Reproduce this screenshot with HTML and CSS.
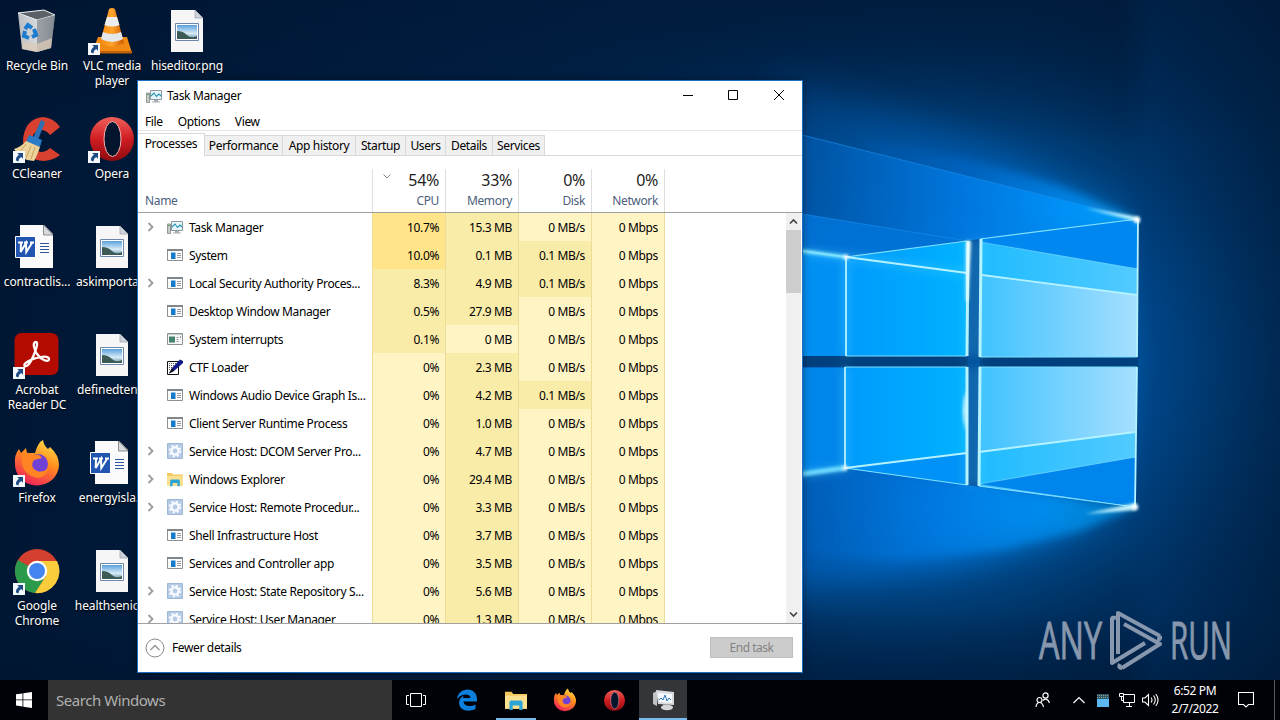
FILE: index.html
```
<!DOCTYPE html>
<html>
<head>
    <meta charset="utf-8"/>
    <title>Desktop</title>
    <link rel="stylesheet" href="styles.css">
</head>
<body>

<!-- Shared icons -->
<svg class="defs" width="0" height="0">
    <defs>
        <linearGradient id="redBall" x1="0" y1="0" x2="0" y2="1">
            <stop offset="0" stop-color="#f0605c"/><stop offset=".5" stop-color="#d01d22"/><stop offset="1" stop-color="#8c0a10"/>
        </linearGradient>
        <linearGradient id="fox" x1=".8" y1="0" x2=".3" y2="1">
            <stop offset="0" stop-color="#ffe14a"/><stop offset=".45" stop-color="#ff8a1e"/><stop offset="1" stop-color="#f0205c"/>
        </linearGradient>
        <linearGradient id="photo" x1="0" y1="0" x2="0" y2="1">
            <stop offset="0" stop-color="#5aa0dc"/><stop offset=".6" stop-color="#d9ecf5"/><stop offset="1" stop-color="#5f8fa8"/>
        </linearGradient>
        <linearGradient id="cone" x1="0" y1="0" x2="1" y2="0">
            <stop offset="0" stop-color="#f58a10"/><stop offset=".5" stop-color="#ffa42c"/><stop offset="1" stop-color="#cc5a00"/>
        </linearGradient>
        <linearGradient id="bin" x1="0" y1="0" x2="1" y2="0">
            <stop offset="0" stop-color="#b9bdc2"/><stop offset=".55" stop-color="#d9dbde"/><stop offset="1" stop-color="#7e848b"/>
        </linearGradient>
    </defs>

    <symbol id="shortcut" viewBox="0 0 12 12">
        <path d="M0 0h12v12H0z" fill="#f4f7fb"/>
        <path d="M4.200 2H10v5.800L8.200 6Q5.600 7.300 5.400 10.400L3 9.600Q2.600 6 6 3.800z" fill="#1e4b86"/>
    </symbol>
    <symbol id="recycle" viewBox="0 0 48 48">
        <path d="M5 6 31 3 42 8 38 41 24 45 9 42z" fill="url(#bin)"/>
        <path d="M5 6 31 3 42 8 24 13z" fill="#5c6167" stroke="#eceef0"/>
        <path d="M24 13 42 8 38 41 24 45z" fill="#868c93" opacity=".75"/>
        <path d="M9 34 24 37 39 31 38 41 24 45 9 42z" fill="#dccbb8" opacity=".75"/>
        <g fill="none" stroke="#1d7cd0" stroke-width="4">
            <path d="M12 22l3-4 4 3"/><path d="M21 22l2 6-4 2"/><path d="M16 31l-5-2 1-5"/>
        </g>
    </symbol>
    <symbol id="vlc" viewBox="0 0 48 48">
        <path d="M10 30h29l5 16H4z" fill="#f08a12"/>
        <path d="M4 44h40v2.500H4z" fill="#c35f05"/>
        <path d="M21 2q3-2 6 0l9 34q-12 7-24 0z" fill="url(#cone)"/>
        <path d="M19 10h10l2.500 8q-7.500 3-15 0z" fill="#eceef0"/>
        <path d="M15 25q9 4 18 0l2 7q-11 6-22 0z" fill="#e4e7ea"/>
    </symbol>
    <symbol id="picture" viewBox="0 0 48 48">
        <path d="M8 3h24l8 8v34H8z" fill="#f6f6f7"/>
        <path d="M32 3v8h8z" fill="#cfd3da" stroke="#9a9faa" stroke-width=".7"/>
        <path d="M12.500 16.500h23v17h-23z" fill="#fff" stroke="#6d87ad"/>
        <path d="M14 18h20v14H14z" fill="url(#photo)"/>
        <path d="M14 24q6 0 10 4t10 1v3H14z" fill="#3c5b57"/>
    </symbol>
    <symbol id="word" viewBox="0 0 48 48">
        <path d="M7 2h24l9 9v34H7z" fill="#fafafa"/>
        <path d="M30.500 2v10H40z" fill="#d8dade" stroke="#777" stroke-width=".8"/>
        <path d="M27 20.500h9M27 23.500h9M27 26.500h9M27 29.500h9" stroke="#2b579a"/>
        <path d="M2.500 13.500h20v21h-20z" fill="#2255b0" stroke="#fff"/>
        <path d="M5 19.500h5M11 19.500h4M17 19.500h4M8 20l-.3 9L13 20l.3 9L19 20" fill="none" stroke="#fff" stroke-width="2"/>
    </symbol>
    <symbol id="ccleaner" viewBox="0 0 48 48">
        <path d="M47 12 37 20q-4-5-9-5-9 1-9 12 0 9 9 10 5 0 9-4l10 7Q41 45 31 46 11 45 10 26 11 4 30 2q11 1 17 10z" fill="#d8402f"/>
        <path d="M28 5l4 2-7 18-5-2z" fill="#2d70b4"/>
        <path d="M16 20l13 5-2 7-14-5z" fill="#2a7cc8"/>
        <path d="M13 26l14 6q-3 9-6 14-13 0-20-12 7-2 12-8z" fill="#edd29a"/>
        <path d="M13 29l-6 8M18 31l-5 12M22 32l-4 12" stroke="#c7a263" fill="none"/>
    </symbol>
    <symbol id="opera" viewBox="0 0 48 48">
        <circle cx="24" cy="24" r="22" fill="url(#redBall)"/>
        <ellipse cx="24.500" cy="24" rx="8.500" ry="17.500" fill="#06152e" stroke="#f3b4b1"/>
    </symbol>
    <symbol id="acrobat" viewBox="0 0 48 48">
        <rect x="1.500" y="2" width="44" height="42" rx="7" fill="#b30b00"/>
        <path d="M23 11c-4 0-2 7 1 12 4 6 12 9 12 5 0-5-16-1-22 3-5 3-2 6 1 3 4-4 12-23 8-23z" fill="none" stroke="#fff" stroke-width="2.300"/>
    </symbol>
    <symbol id="firefox" viewBox="0 0 48 48">
        <path d="M2 25Q1 16 6 10l2 4 5-5 1 5 8 0Q25 3 30 1q1 6 5 9l2-2q9 8 9 18a22 21 0 0 1-44-1z" fill="url(#fox)"/>
        <circle cx="25" cy="25" r="10" fill="#7140d5"/>
        <path d="M9 15q7-3 12 1 5-2 8 3l-8 2q-5 7 3 11 7 2 12-4-1 9-11 11Q9 36 9 22z" fill="#ff8524"/>
    </symbol>
    <symbol id="chrome" viewBox="0 0 48 48">
        <circle cx="24" cy="24" r="22" fill="#d3402f"/>
        <path d="M24 24 5 13a22 22 0 0 0 17 33l11-17z" fill="#2b9a4b"/>
        <path d="M24 14h20a22 22 0 0 1-22 32l11-17z" fill="#fbcc3c"/>
        <circle cx="24" cy="24" r="10.200" fill="#fff"/>
        <circle cx="24" cy="24" r="8" fill="#4484ee"/>
    </symbol>
    <symbol id="taskmgr" viewBox="0 0 16 16">
        <path d="M.5 5h3v9.500h-3z" fill="#c9cdc9" stroke="#7d857f" stroke-width=".8"/>
        <path d="M1.200 6.500h1.600" stroke="#3f9b55"/>
        <path d="M4.500 2.500h11v9h-11z" fill="#e7f5fa" stroke="#8c979e"/>
        <path d="M5 8l3-3 2.500 3.500L13 6l2 2" fill="none" stroke="#2195b5" stroke-width="1.100"/>
        <path d="M8 12h4v1.500h2v1H6v-1h2z" fill="#a8afb4"/>
    </symbol>
    <symbol id="app" viewBox="0 0 16 16">
        <path d="M.5 2.500h15v11H.5z" fill="#fbfcfd" stroke="#8b9297"/>
        <path d="M0 2h16v2H0z" fill="#7f878c"/>
        <path d="M4 5.500h4.500v6.500H4z" fill="#1779ca"/>
        <path d="M10 6.500h4M10 8.500h4M10 10.500h4" stroke="#8a9197" stroke-width=".9"/>
    </symbol>
    <symbol id="interrupts" viewBox="0 0 16 16">
        <path d="M.5 2.500h15v11H.5z" fill="#f5f6f6" stroke="#8b9297"/>
        <path d="M1 3.500h14" stroke="#c5cacb"/>
        <path d="M2 5.500h6v6H2z" fill="#46806f"/>
        <path d="M9.500 6.500h2M9.500 8.500h2M9.500 10.500h2M13.500 5v2" stroke="#858c90" stroke-width=".9"/>
    </symbol>
    <symbol id="ctf" viewBox="0 0 16 16">
        <path d="M.5 2.500h11v13H.5z" fill="#fff" stroke="#111"/>
        <path d="M2 4.500h8M2 6.500h8M2 8.500h6M2 10.500h4" stroke="#555" stroke-dasharray="1 1"/>
        <path d="M2 14.500 5 9 13 .5l3 1.500v2L7 12z" fill="#111a88"/>
        <path d="M2 14.500 5 9l2 3z" fill="#111"/>
    </symbol>
    <symbol id="gear" viewBox="0 0 16 16">
        <path d="M.5.5h15v15H.5z" fill="#b5cae4" stroke="#9db7d8"/>
        <circle cx="8" cy="8" r="3.600" fill="none" stroke="#f7fafe" stroke-width="2.400"/>
        <circle cx="8" cy="8" r="5.400" fill="none" stroke="#f7fafe" stroke-width="2" stroke-dasharray="2.100 2.140"/>
    </symbol>
    <symbol id="folder" viewBox="0 0 20 18">
        <path d="M0 1.500h6l1.500 2H20V17H0z" fill="#f3c75c"/>
        <path d="M0 5h20v12H0z" fill="#fbe08f"/>
        <path d="M4 18v-7q0-1.500 1.500-1.500h9Q16 9.500 16 11v7h-3v-4H7v4z" fill="#2ba3d4"/>
    </symbol>
    <symbol id="chevron" viewBox="0 0 8 10">
        <path d="M1.500 1 5.500 5l-4 4" fill="none" stroke="#9c9c9c" stroke-width="1.800"/>
    </symbol>
</svg>

<div id="desktop">

    <svg class="wallpaper" width="1280" height="720" viewBox="0 0 1280 720">
        <defs>
            <radialGradient id="halo" gradientUnits="userSpaceOnUse" cx="0" cy="0" r="1" gradientTransform="translate(900 360) scale(500 370)">
                <stop offset="0" stop-color="#0070d4"/><stop offset=".4" stop-color="#0062bc"/>
                <stop offset=".66" stop-color="#004380" stop-opacity=".8"/><stop offset="1" stop-color="#002550" stop-opacity="0"/>
            </radialGradient>
            <linearGradient id="base" x1="0" y1="0" x2="1" y2="0">
                <stop offset="0" stop-color="#001734"/><stop offset=".5" stop-color="#00234a"/>
                <stop offset=".8" stop-color="#00254c"/><stop offset="1" stop-color="#001f42"/>
            </linearGradient>
            <linearGradient id="topShade" x1="0" y1="0" x2="0" y2="1">
                <stop offset="0" stop-color="#00122c" stop-opacity=".4"/><stop offset=".2" stop-color="#00122c" stop-opacity="0"/>
                <stop offset=".85" stop-color="#00122c" stop-opacity="0"/><stop offset="1" stop-color="#00122c" stop-opacity=".5"/>
            </linearGradient>
            <linearGradient id="rightShade" gradientUnits="userSpaceOnUse" x1="1120" y1="0" x2="1280" y2="0">
                <stop offset="0" stop-color="#00366e" stop-opacity="0"/><stop offset=".2" stop-color="#00366e" stop-opacity=".9"/><stop offset="1" stop-color="#002348"/>
            </linearGradient>
            <linearGradient id="beam" gradientUnits="userSpaceOnUse" x1="800" y1="0" x2="1140" y2="0">
                <stop offset="0" stop-color="#0054a4"/><stop offset=".45" stop-color="#0078e0"/><stop offset=".75" stop-color="#0090f8"/><stop offset="1" stop-color="#00a4ff"/>
            </linearGradient>
            <linearGradient id="spill" gradientUnits="userSpaceOnUse" x1="800" y1="0" x2="1140" y2="0">
                <stop offset="0" stop-color="#00488e"/><stop offset=".5" stop-color="#0066c4"/><stop offset=".8" stop-color="#0090f8"/><stop offset="1" stop-color="#18b4ff"/>
            </linearGradient>
            <linearGradient id="lowerSpill" gradientUnits="userSpaceOnUse" x1="800" y1="0" x2="1140" y2="0">
                <stop offset="0" stop-color="#005cb4"/><stop offset=".35" stop-color="#0078e0"/><stop offset=".75" stop-color="#0098fc"/><stop offset="1" stop-color="#00b0ff"/>
            </linearGradient>
            <linearGradient id="paneLeft" x1="0" y1="0" x2="1" y2="0">
                <stop offset="0" stop-color="#009afc"/><stop offset="1" stop-color="#00b2ff"/>
            </linearGradient>
            <linearGradient id="paneRight" x1="0" y1="0" x2="1" y2="0">
                <stop offset="0" stop-color="#3ec2ff"/><stop offset="1" stop-color="#a6dfff"/>
            </linearGradient>
            <filter id="soft" x="-30%" y="-50%" width="160%" height="200%"><feGaussianBlur stdDeviation="18"/></filter>
            <filter id="glow" x="-50%" y="-50%" width="200%" height="200%"><feGaussianBlur stdDeviation="5"/></filter>
            <filter id="spark" x="-50%" y="-100%" width="200%" height="300%"><feGaussianBlur stdDeviation="1.500"/></filter>
        </defs>
        <rect width="1280" height="720" fill="url(#base)"/>
        <rect width="1280" height="720" fill="url(#halo)"/>
        <rect x="1120" width="160" height="720" fill="url(#rightShade)" opacity=".5"/>
        <rect width="1280" height="720" fill="url(#topShade)"/>

        <!-- light spilling out of the panes -->
        <path d="M1120 222 1000 160 900 120 780 80V260H1000z" fill="url(#spill)" opacity=".55" filter="url(#soft)"/>
        <path d="M1138 219 1060 186 960 158 860 140 900 180 1060 225z" fill="url(#spill)" opacity=".7" filter="url(#glow)"/>
        <path d="M1100 508 1040 535 960 560 780 590V470H980z" fill="url(#lowerSpill)" opacity=".8" filter="url(#soft)"/>
        <path d="M1136 507 1080 531 1000 550 900 560 780 550V480L845 468 979 486z" fill="url(#lowerSpill)" opacity=".6" filter="url(#glow)"/>
        <path d="M802 135 1138 219 980 239 967 241 802 214z" fill="url(#beam)" opacity=".85"/>
        <path d="M802 214 967 241 846 257 802 251z" fill="#0076da" opacity=".85"/>
        <path d="M802 252 846 257V356H802z" fill="#0090f4"/>
        <path d="M802 368H845V468L802 474z" fill="#0086ea"/>
        <path d="M802 135 1138 219M802 214 967 241" stroke="#1d92f0" opacity=".6"/>

        <!-- cross bars -->
        <path d="M802 356H1138V367H802z" fill="#00407f"/>
        <path d="M968 241 980 239V487L967 485z" fill="#004f9c"/>

        <!-- panes -->
        <path d="M846 257 967 241V356H846z" fill="url(#paneLeft)"/>
        <path d="M845 367H967V485L845 468z" fill="url(#paneLeft)"/>
        <path d="M845 468 967 453V485z" fill="#0092f6"/>
        <path d="M980 239 1138 219 1137 357H980z" fill="url(#paneRight)"/>
        <path d="M980 239 1138 219V269L980 242z" fill="#0088f0"/>
        <path d="M980 242 1138 269V295L980 275z" fill="#00b6ff" opacity=".5"/>
        <path d="M979 367H1137L1135 507 979 486z" fill="url(#paneRight)"/>
        <path d="M979 484 1136 457 1135 507z" fill="#0085ec"/>
        <path d="M979 452 1136 432V457L979 484z" fill="#00b6ff" opacity=".5"/>

        <!-- bright edges -->
        <g fill="none" stroke="#5fd4ff" stroke-width="5" opacity=".45" filter="url(#glow)">
            <path d="M802 252 846 257 967 273M846 257V356M968 241V356M967 367V485M845 367V468L802 474M980 239V357M979 367V486"/>
        </g>
        <g fill="none" stroke="#7fe0ff" stroke-width="1.200">
            <path d="M846 257 967 241M845 468 967 485M980 239 1138 219M979 486 1135 507M846 356H967M845 367H967M980 357H1137M979 367H1137"/>
            <path d="M980 242 1138 269M979 484 1136 457" opacity=".5"/>
        </g>
        <g fill="none" stroke="#b4f2ff" stroke-width="1.800">
            <path d="M802 251 846 257 967 273M982 275 1137 295M845 468 967 453M979 452 1135 432"/>
            <path d="M846 257V356M845 367V468"/>
            <path d="M1138 219 1137 357M1137 367 1135 507"/>
        </g>
        <path d="M802 474 845 468" stroke="#6fdcff" stroke-width="5" filter="url(#spark)"/>
        <path d="M802 251 846 257" stroke="#6fdcff" stroke-width="4" filter="url(#spark)"/>
        <path d="M981 239 980 357M980 367 979 486M968 241 967 356M967 367V485" stroke="#b5f4ff" stroke-width="3"/>
        <path d="M966 241h5l-3 60h-2zM966 390q-6 20 0 42z" fill="#eaffff" filter="url(#spark)"/>
        <path d="M1085 208 1139 217V222zM1085 514 1136 503V510z" fill="#c4f6ff" filter="url(#spark)"/>
        <circle cx="1137" cy="220" r="3" fill="#fff" filter="url(#spark)"/>
        <circle cx="1135" cy="507" r="3" fill="#fff" filter="url(#spark)"/>
        <circle cx="846" cy="257" r="2.500" fill="#fff" filter="url(#spark)"/>
        <circle cx="845" cy="468" r="2.500" fill="#fff" filter="url(#spark)"/>
    </svg>

    <svg class="watermark" width="200" height="84" viewBox="0 -14 200 84">
        <g class="watermark-text">
            <text x="1" y="50" textLength="63" lengthAdjust="spacingAndGlyphs">ANY</text>
            <text x="132" y="50" textLength="62" lengthAdjust="spacingAndGlyphs">RUN</text>
        </g>
        <g fill="none" stroke="#8797ad" stroke-width="4" stroke-linejoin="round">
            <path d="M80 45V4L122 27M74 9V54L107 34"/>
            <path d="M86 15 122 35 84 59"/>
            <path d="M80 45V18M74 10q0-2 4-1M122 27q1 4-3 3M84 59q-4 0-2-4"/>
        </g>
    </svg>

    <div class="icons">
        <div class="icon"><svg><use href="#recycle"/></svg><span>Recycle Bin</span></div>
        <div class="icon"><svg><use href="#ccleaner"/><use href="#shortcut" y="36" width="12" height="12"/></svg><span>CCleaner</span></div>
        <div class="icon"><svg><use href="#word"/></svg><span>contractlis...</span></div>
        <div class="icon"><svg><use href="#acrobat"/><use href="#shortcut" y="36" width="12" height="12"/></svg><span>Acrobat<br/>Reader DC</span></div>
        <div class="icon"><svg><use href="#firefox"/><use href="#shortcut" y="36" width="12" height="12"/></svg><span>Firefox</span></div>
        <div class="icon"><svg><use href="#chrome"/><use href="#shortcut" y="36" width="12" height="12"/></svg><span>Google<br/>Chrome</span></div>
        <div class="icon"><svg><use href="#vlc"/><use href="#shortcut" y="36" width="12" height="12"/></svg><span>VLC media<br/>player</span></div>
        <div class="icon"><svg><use href="#opera"/><use href="#shortcut" y="36" width="12" height="12"/></svg><span>Opera</span></div>
        <div class="icon"><svg><use href="#picture"/></svg><span>askimporta...</span></div>
        <div class="icon"><svg><use href="#picture"/></svg><span>definedten...</span></div>
        <div class="icon"><svg><use href="#word"/></svg><span>energyisla...</span></div>
        <div class="icon"><svg><use href="#picture"/></svg><span>healthsenio...</span></div>
        <div class="icon"><svg><use href="#picture"/></svg><span>hiseditor.png</span></div>
    </div>

    <div class="window">
        <div class="titlebar">
            <svg class="small"><use href="#taskmgr"/></svg>
            <span class="title">Task Manager</span>
            <svg class="caption" width="136" height="30" viewBox="0 0 136 30">
                <path d="M18 14.500h10M63.500 9.500h9v9h-9zM109 9l10 10M119 9l-10 10" fill="none" stroke="#000"/>
            </svg>
        </div>
        <div class="menu"><span>File</span><span>Options</span><span>View</span></div>
        <div class="tabs">
            <span class="tab active">Processes</span>
            <span class="tab performance">Performance</span>
            <span class="tab history">App history</span>
            <span class="tab startup">Startup</span>
            <span class="tab users">Users</span>
            <span class="tab details">Details</span>
            <span class="tab services">Services</span>
        </div>
        <div class="head">
            <div class="name">Name</div>
            <div class="col"><svg class="sort" width="8" height="5"><path d="M.5.5 4 4 7.500.5" fill="none" stroke="#888"/></svg><b>54%</b>CPU</div>
            <div class="col"><b>33%</b>Memory</div>
            <div class="col"><b>0%</b>Disk</div>
            <div class="col"><b>0%</b>Network</div>
            <div class="rest"></div>
        </div>
        <div class="list">
            <div class="rows">
                <div class="row"><svg class="open"><use href="#chevron"/></svg><svg class="small"><use href="#taskmgr"/></svg><span>Task Manager</span><i class="hot">10.7%</i><i class="mid">15.3 MB</i><i>0 MB/s</i><i>0 Mbps</i></div>
                <div class="row"><svg class="open"></svg><svg class="small"><use href="#app"/></svg><span>System</span><i class="hot">10.0%</i><i class="mid">0.1 MB</i><i class="mid">0.1 MB/s</i><i>0 Mbps</i></div>
                <div class="row"><svg class="open"><use href="#chevron"/></svg><svg class="small"><use href="#app"/></svg><span>Local Security Authority Proces...</span><i class="mid">8.3%</i><i class="mid">4.9 MB</i><i class="mid">0.1 MB/s</i><i>0 Mbps</i></div>
                <div class="row"><svg class="open"></svg><svg class="small"><use href="#app"/></svg><span>Desktop Window Manager</span><i class="mid">0.5%</i><i class="mid">27.9 MB</i><i>0 MB/s</i><i>0 Mbps</i></div>
                <div class="row"><svg class="open"></svg><svg class="small"><use href="#interrupts"/></svg><span>System interrupts</span><i class="mid">0.1%</i><i>0 MB</i><i>0 MB/s</i><i>0 Mbps</i></div>
                <div class="row"><svg class="open"></svg><svg class="small"><use href="#ctf"/></svg><span>CTF Loader</span><i>0%</i><i class="mid">2.3 MB</i><i>0 MB/s</i><i>0 Mbps</i></div>
                <div class="row"><svg class="open"></svg><svg class="small"><use href="#app"/></svg><span>Windows Audio Device Graph Is...</span><i>0%</i><i class="mid">4.2 MB</i><i class="mid">0.1 MB/s</i><i>0 Mbps</i></div>
                <div class="row"><svg class="open"></svg><svg class="small"><use href="#app"/></svg><span>Client Server Runtime Process</span><i>0%</i><i class="mid">1.0 MB</i><i>0 MB/s</i><i>0 Mbps</i></div>
                <div class="row"><svg class="open"><use href="#chevron"/></svg><svg class="small"><use href="#gear"/></svg><span>Service Host: DCOM Server Pro...</span><i>0%</i><i class="mid">4.7 MB</i><i>0 MB/s</i><i>0 Mbps</i></div>
                <div class="row"><svg class="open"><use href="#chevron"/></svg><svg class="small"><use href="#folder"/></svg><span>Windows Explorer</span><i>0%</i><i class="mid">29.4 MB</i><i>0 MB/s</i><i>0 Mbps</i></div>
                <div class="row"><svg class="open"><use href="#chevron"/></svg><svg class="small"><use href="#gear"/></svg><span>Service Host: Remote Procedur...</span><i>0%</i><i class="mid">3.3 MB</i><i>0 MB/s</i><i>0 Mbps</i></div>
                <div class="row"><svg class="open"></svg><svg class="small"><use href="#app"/></svg><span>Shell Infrastructure Host</span><i>0%</i><i class="mid">3.7 MB</i><i>0 MB/s</i><i>0 Mbps</i></div>
                <div class="row"><svg class="open"></svg><svg class="small"><use href="#app"/></svg><span>Services and Controller app</span><i>0%</i><i class="mid">3.5 MB</i><i>0 MB/s</i><i>0 Mbps</i></div>
                <div class="row"><svg class="open"><use href="#chevron"/></svg><svg class="small"><use href="#gear"/></svg><span>Service Host: State Repository S...</span><i>0%</i><i class="mid">5.6 MB</i><i>0 MB/s</i><i>0 Mbps</i></div>
                <div class="row"><svg class="open"><use href="#chevron"/></svg><svg class="small"><use href="#gear"/></svg><span>Service Host: User Manager</span><i>0%</i><i class="mid">1.3 MB</i><i>0 MB/s</i><i>0 Mbps</i></div>
            </div>
            <div class="scrollbar">
                <svg width="15" height="17"><path d="M4 10.500l3.500-3.500 3.500 3.500" fill="none" stroke="#444" stroke-width="1.700"/></svg>
                <div class="thumb"></div>
                <svg width="15" height="17"><path d="M4 6.500l3.500 3.500 3.500-3.500" fill="none" stroke="#444" stroke-width="1.700"/></svg>
            </div>
        </div>
        <div class="footer">
            <svg width="20" height="20"><circle cx="10" cy="10" r="9" fill="none" stroke="#8a8a8a"/><path d="M5.500 12l4.500-4.500 4.500 4.500" fill="none" stroke="#999" stroke-width="1.500"/></svg>
            <span>Fewer details</span>
            <button disabled>End task</button>
        </div>
    </div>
</div>

<div class="taskbar">
    <div class="start"><svg width="16" height="16"><path d="M0 2.300 6.500 1.400V7.500H0zM7.300 1.300 16 0v7.500H7.300zM0 8.300h6.500v6.200L0 13.600zM7.300 8.300H16V16l-8.700-1.300z" fill="#fff"/></svg></div>
    <div class="search">Search Windows</div>
    <div class="task view"><svg width="20" height="14"><path d="M4.500.5h11v13h-11zM3 2.500H.5v9H3M17 2.500h2.500v9H17" fill="none" stroke="#fff"/></svg></div>
    <div class="task"><svg width="22" height="22" viewBox="0 0 22 22"><path d="M1 10C2 4 6 .5 11.500.5 17 .5 21 4.500 21 10v2.500H7.500c.3 4.500 6.500 6 12 3V20C12 23.500 3.500 21.500 3 14c0-3.500 2-6 5-7.500-.7.800-1 1.500-1.100 2.500H14.500C14.500 4.500 6 4 1 10z" fill="#0d7fdc"/></svg></div>
    <div class="task running"><svg width="22" height="20"><use href="#folder"/></svg></div>
    <div class="task"><svg width="24" height="24"><use href="#firefox"/></svg></div>
    <div class="task"><svg width="23" height="23"><use href="#opera"/></svg></div>
    <div class="task running current">
        <svg width="23" height="22" viewBox="0 0 23 22">
            <path d="M1 4l4-2v15l-4-2z" fill="#bfc2c4"/>
            <path d="M4 1l18 2v13L6 15z" fill="#d7d9db"/>
            <path d="M6 4l14 1v9L7 13z" fill="#f4faff"/>
            <path d="M7 11l2-2 2 2 2-5 2 6 2-3 2 2" fill="none" stroke="#2c75bd"/>
            <path d="M11 15h6v3H11z" fill="#999"/><ellipse cx="15" cy="18.500" rx="6" ry="2.700" fill="#d4d6d7"/>
        </svg>
    </div>
    <div class="tray">
        <svg class="people" width="16" height="16"><g fill="none" stroke="#fff" stroke-width="1.200"><circle cx="10.500" cy="3.500" r="2.600"/><circle cx="4.500" cy="8" r="2.500"/><path d="M8 8.500q4-3.500 6.500 2.500M1 15q.5-4.500 3.500-4.500T8.500 15"/></g></svg>
        <svg class="up" width="12" height="8"><path d="M.5 7 6 1.500 11.500 7" fill="none" stroke="#fff" stroke-width="1.200"/></svg>
        <svg class="meter" width="12" height="13"><path d="M0 0h12v13H0z" fill="#5cb8f4"/><path d="M0 0h12v5H0z" fill="#30586c"/><path d="M0 1.500h12M0 3.500h12" stroke="#8fa080" stroke-dasharray="1 1"/></svg>
        <svg class="net" width="16" height="14"><path d="M4.500 1.500h11v8h-11v-6M.5.500h4v3h-4zM2.500 3.500v4h2M7 13.500h6M10.500 9.500v4" fill="none" stroke="#fff"/></svg>
        <svg class="volume" width="17" height="14"><path d="M.5 5h2.500L6.500 1.500v11L3 9H.5zM9 4.500q2 2.500 0 5M11.500 2.500q3.500 4.500 0 9M13.800 1q4.500 6 0 12" fill="none" stroke="#fff" stroke-width="1.100"/></svg>
        <div class="clock">6:52 PM<br/>2/7/2022</div>
        <svg class="notify" width="16" height="16"><path d="M.5.500h15v12h-5L8 15l-2.500-2.500h-5z" fill="none" stroke="#fff" stroke-width="1.100"/></svg>
        <div class="peek"></div>
    </div>
</div>

</body>
</html>
```
FILE: styles.css
```
body {
    margin: 0;
    width: 1280px;
    height: 720px;
    overflow: hidden;
    background: #001734;
    font-family: "Noto Sans", "Open Sans", sans-serif;
    font-size: 12px;
    letter-spacing: -0.36px;
    color: #000;
}

.defs {
    position: absolute;
}

#desktop {
    position: relative;
    height: 680px;
    overflow: hidden;
}

.wallpaper {
    position: absolute;
    left: 0;
    top: 0;
}

.watermark {
    position: absolute;
    left: 1038px;
    top: 595px;
}

.watermark-text {
    font-family: "Open Sans", sans-serif;
    font-size: 51px;
    letter-spacing: 0;
    fill: #8797ad;
    stroke: #8797ad;
    stroke-width: 1px;
}

/* Desktop icons */

.icons {
    position: relative;
    display: grid;
    grid-template-rows: repeat(6, 108px);
    grid-auto-columns: 75px;
    grid-auto-flow: column;
    width: 225px;
}

.icon {
    display: flex;
    flex-direction: column;
    align-items: center;
    padding: 7px 1px 0 0;
    color: #fff;
    text-align: center;
    line-height: 15px;
    letter-spacing: -0.1px;
    text-shadow: 0 1px 2px #000;
    white-space: nowrap;
}

.icon > svg {
    width: 48px;
    height: 48px;
    margin-bottom: 3px;
    flex: none;
}

/* Task Manager window */

.window {
    position: absolute;
    left: 137px;
    top: 80px;
    width: 664px;
    height: 591px;
    border: 1px solid #1c6fc0;
    background: #fff;
    display: flex;
    flex-direction: column;
    box-shadow: 0 0 8px rgba(0, 0, 0, 0.4);
}

.small {
    width: 16px;
    height: 16px;
    flex: none;
}

.titlebar {
    display: flex;
    align-items: center;
    height: 30px;
    padding-left: 8px;
}

.title {
    margin: -2px 0 0 5px;
}

.caption {
    margin-left: auto;
    padding-right: 1px;
}

.menu {
    display: flex;
    gap: 15px;
    height: 19px;
    line-height: 21px;
    padding-left: 7px;
    border-bottom: 1px solid #e6e6e6;
}

.tabs {
    display: flex;
    align-items: flex-end;
    height: 24px;
    border-bottom: 1px solid #d9d9d9;
}

.tab {
    box-sizing: border-box;
    height: 20px;
    line-height: 20px;
    text-align: center;
    background: #f0f0f0;
    border: 1px solid #d9d9d9;
    border-left: none;
    border-bottom: none;
}

.tab.active {
    width: 67px;
    height: 23px;
    margin-bottom: -1px;
    background: #fff;
    line-height: 20px;
}

.performance { width: 78px; }
.history { width: 73px; }
.startup { width: 50px; }
.users { width: 40px; }
.details { width: 47px; }
.services { width: 52px; }

.head {
    display: flex;
    align-items: flex-end;
    height: 56px;
    border-bottom: 1px solid #a0a0a0;
    color: #4c607a;
}

.head .name {
    width: 227px;
    padding-left: 7px;
    line-height: 23px;
}

.col {
    position: relative;
    box-sizing: border-box;
    width: 73px;
    height: 43px;
    padding: 0 6px 0 0;
    border-left: 1px solid #dedede;
    text-align: right;
    line-height: 17px;
}

.col b {
    display: block;
    font-size: 16px;
    font-weight: normal;
    line-height: 23px;
    letter-spacing: -0.3px;
    color: #1e1e1e;
}

.sort {
    position: absolute;
    left: 10px;
    top: 5px;
}

.rest {
    height: 43px;
    border-left: 1px solid #dedede;
}

.list {
    display: flex;
    height: 410px;
    overflow: hidden;
    border-bottom: 1px solid #a0a0a0;
}

.rows {
    flex: 1;
}

.row {
    display: flex;
    align-items: center;
    height: 28px;
    line-height: 29px;
    white-space: nowrap;
}

.open {
    width: 8px;
    height: 10px;
    margin: 0 12px 0 9px;
    flex: none;
}

.row span {
    width: 183px;
    padding-left: 6px;
}

.row i {
    box-sizing: border-box;
    width: 73px;
    height: 28px;
    padding-right: 6px;
    border-left: 1px solid #ecdc98;
    background: #fff4c4;
    font-style: normal;
    text-align: right;
}

.row i:last-child {
    width: 74px;
    border-right: 1px solid #ecdc98;
}

.row .mid {
    background: #f9eca8;
}

.row .hot {
    background: #ffe48a;
}

.scrollbar {
    display: flex;
    flex-direction: column;
    width: 15px;
    margin-right: 1px;
    background: #f0f0f0;
}

.thumb {
    height: 63px;
    margin-bottom: auto;
    background: #cdcdcd;
}

.footer {
    display: flex;
    align-items: center;
    flex: 1;
    padding: 0 9px 1px 7px;
}

.footer span {
    margin-left: 7px;
}

.footer button {
    width: 83px;
    height: 21px;
    margin-left: auto;
    padding: 0;
    border: 1px solid #bfbfbf;
    background: #cccccc;
    color: #838383;
    font: inherit;
    line-height: 19px;
    letter-spacing: -0.5px;
}

/* Taskbar */

.taskbar {
    display: flex;
    height: 40px;
    background: #000207;
    color: #fff;
}

.start {
    display: flex;
    align-items: center;
    justify-content: center;
    width: 48px;
}

.search {
    width: 336px;
    padding-left: 8px;
    background: #333;
    color: #b0b0b0;
    font-size: 15px;
    line-height: 41px;
    letter-spacing: -0.45px;
}

.task {
    box-sizing: border-box;
    position: relative;
    display: flex;
    align-items: center;
    justify-content: center;
    width: 48px;
    margin-right: 1px;
}

.task.view {
    margin-right: 3px;
}

.running::after {
    content: "";
    position: absolute;
    left: 4px;
    right: 4px;
    bottom: 0;
    height: 2px;
    background: #76b9ed;
}

.current {
    background: #333539;
}

.current::after {
    left: 0;
    right: 0;
}

.tray {
    display: flex;
    align-items: center;
    margin-left: auto;
}

.up { margin-left: 22px; }
.meter { margin-left: 12px; }
.net { margin-left: 10px; }
.volume { margin-left: 7px; }

.clock {
    width: 62px;
    margin-left: 5px;
    text-align: center;
    line-height: 18px;
}

.notify {
    margin-left: 12px;
}

.peek {
    height: 40px;
    width: 5px;
    margin-left: 20px;
    border-left: 1px solid #55585c;
}
```
